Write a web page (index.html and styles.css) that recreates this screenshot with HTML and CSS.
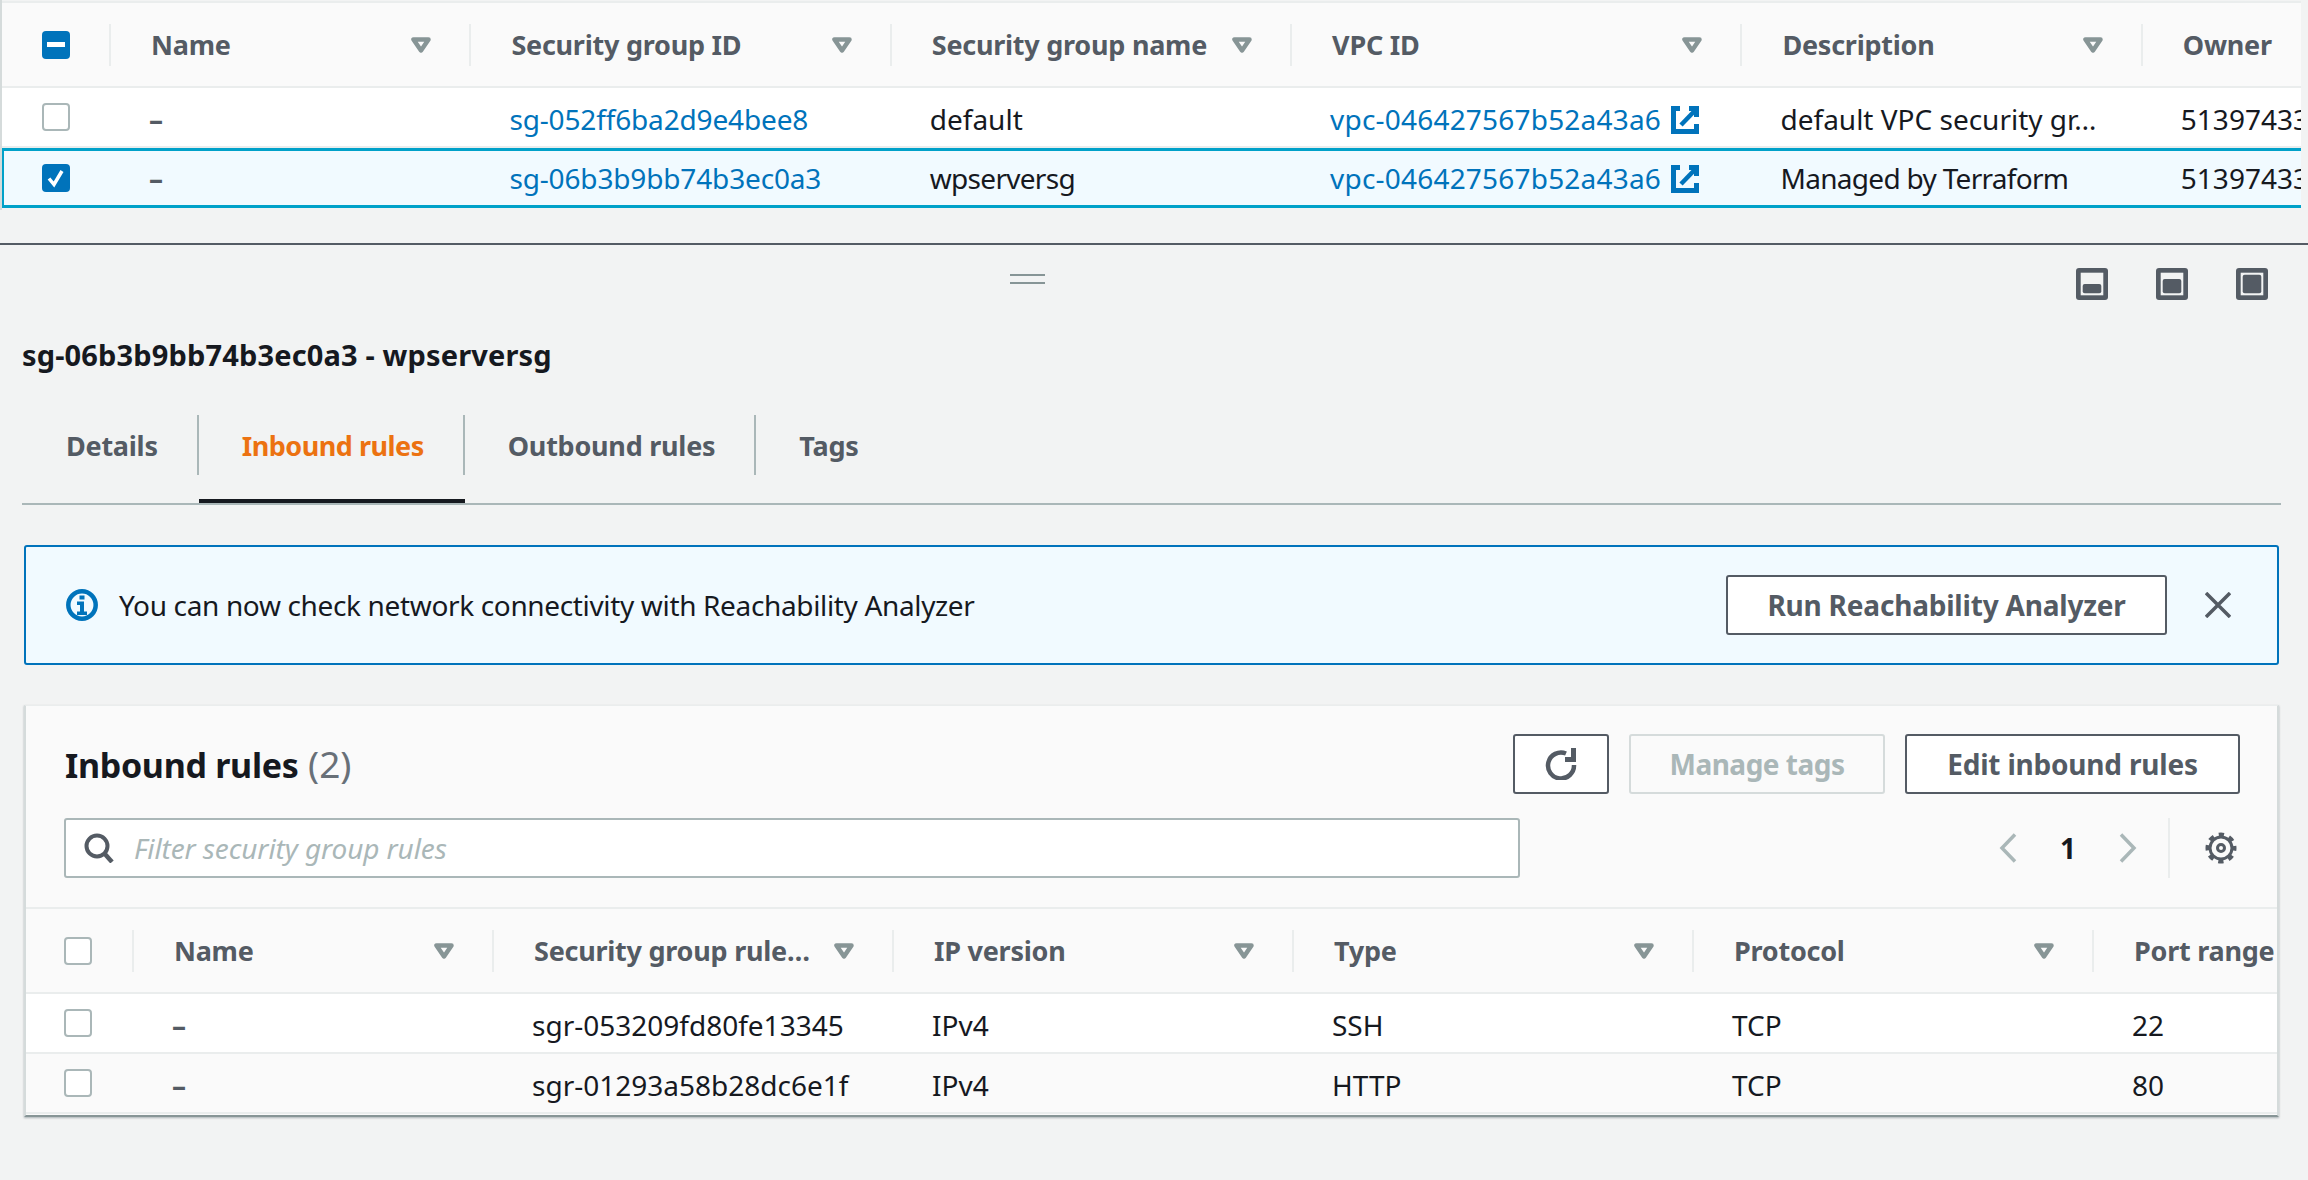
FILE: index.html
```html
<!DOCTYPE html>
<html lang="en">
<head>
  <meta charset="UTF-8">
  <title>Security Groups</title>
  <link rel="stylesheet" href="styles.css">
</head>
<body>
  <svg class="defs" width="0" height="0">
    <symbol id="caret" viewBox="0 0 20 16"><path d="M2.500 2.400h15L10 13.400z" fill="none" stroke="#879596" stroke-width="4.500" stroke-linejoin="round"/></symbol>
    <symbol id="ext" viewBox="0 0 28 28"><path d="M9 2.500H2.500v23h23V18" fill="none" stroke="#0073bb" stroke-width="5"/><path d="M18 2.500h7.500V11" fill="none" stroke="#0073bb" stroke-width="5"/><path d="M10 19L24 4.500" fill="none" stroke="#0073bb" stroke-width="4.500"/></symbol>
  </svg>

  <section class="top-table">
    <table class="grid">
      <colgroup>
        <col class="t1"><col class="t2"><col class="t3"><col class="t4"><col class="t5"><col class="t6"><col class="t7">
      </colgroup>
      <thead>
        <tr>
          <th class="check-col"><span class="check minus"><i></i></span></th>
          <th><div class="th-in">Name<svg class="caret"><use href="#caret"/></svg></div></th>
          <th><div class="th-in">Security group ID<svg class="caret"><use href="#caret"/></svg></div></th>
          <th><div class="th-in">Security group name<svg class="caret"><use href="#caret"/></svg></div></th>
          <th><div class="th-in">VPC ID<svg class="caret"><use href="#caret"/></svg></div></th>
          <th><div class="th-in">Description<svg class="caret"><use href="#caret"/></svg></div></th>
          <th><div class="th-in">Owner</div></th>
        </tr>
      </thead>
      <tbody>
        <tr>
          <td class="check-col"><span class="check"></span></td>
          <td class="dash">–</td>
          <td><a class="sg-link">sg-052ff6ba2d9e4bee8</a></td>
          <td>default</td>
          <td><a class="vpc-link">vpc-046427567b52a43a6</a><svg class="ext"><use href="#ext"/></svg></td>
          <td>default VPC security gr…</td>
          <td>513974335</td>
        </tr>
        <tr class="selected">
          <td class="check-col"><span class="check on"><svg viewBox="0 0 28 28"><path d="M7 14.500l5 6L20 7" fill="none" stroke="#fff" stroke-width="3.500"/></svg></span></td>
          <td class="dash">–</td>
          <td><a class="sg-link">sg-06b3b9bb74b3ec0a3</a></td>
          <td class="tight">wpserversg</td>
          <td><a class="vpc-link">vpc-046427567b52a43a6</a><svg class="ext"><use href="#ext"/></svg></td>
          <td class="tight">Managed by Terraform</td>
          <td>513974335</td>
        </tr>
      </tbody>
    </table>
  </section>

  <section class="split">
    <div class="split-bar">
      <div class="handle"></div>
      <div class="pane-icons">
        <svg class="pane-icon" viewBox="0 0 32 32"><rect width="32" height="32" rx="3" fill="#545b64"/><rect x="4.700" y="4.700" width="22.600" height="22.600" fill="#f2f3f3"/><rect x="6.700" y="16" width="18.600" height="9.300" rx="2" fill="#545b64"/></svg>
        <svg class="pane-icon" viewBox="0 0 32 32"><rect width="32" height="32" rx="3" fill="#545b64"/><rect x="4.700" y="4.700" width="22.600" height="22.600" fill="#f2f3f3"/><rect x="6.700" y="11" width="18.600" height="14.300" rx="2" fill="#545b64"/></svg>
        <svg class="pane-icon" viewBox="0 0 32 32"><rect width="32" height="32" rx="3" fill="#545b64"/><rect x="4.700" y="4.700" width="22.600" height="22.600" fill="#f2f3f3"/><rect x="6.700" y="6.700" width="18.600" height="18.600" rx="2" fill="#545b64"/></svg>
      </div>
    </div>

    <h2 class="detail-title">sg-06b3b9bb74b3ec0a3 - wpserversg</h2>

    <nav class="tabs">
      <a class="tab">Details</a>
      <a class="tab active">Inbound rules</a>
      <a class="tab">Outbound rules</a>
      <a class="tab last">Tags</a>
    </nav>

    <div class="flash">
      <svg class="info" viewBox="0 0 32 32"><circle cx="16" cy="16" r="13.700" fill="none" stroke="#0073bb" stroke-width="4.500"/><rect x="13.500" y="6.500" width="5" height="4" fill="#0073bb"/><path d="M11 12.500h7v10h3v3.500H11v-3.500h3v-6.500h-3z" fill="#0073bb"/></svg>
      <span class="flash-text">You can now check network connectivity with Reachability Analyzer</span>
      <button class="btn run">Run Reachability Analyzer</button>
      <svg class="close" viewBox="0 0 26 26"><path d="M1 1l24 24M25 1L1 25" fill="none" stroke="#545b64" stroke-width="3.500"/></svg>
    </div>

    <div class="card">
      <div class="card-head">
        <div class="card-row">
          <h3 class="card-title">Inbound rules <span class="count">(2)</span></h3>
          <button class="btn icon-btn"><svg viewBox="0 0 32 32" width="32" height="32"><path d="M21 5.500A13 13 0 1 0 29 17" fill="none" stroke="#545b64" stroke-width="4.500"/><path d="M28.500 0v11.500H20" fill="none" stroke="#545b64" stroke-width="5"/></svg></button>
          <button class="btn disabled">Manage tags</button>
          <button class="btn edit">Edit inbound rules</button>
        </div>
        <div class="card-row filter-row">
          <div class="filter">
            <svg viewBox="0 0 30 30" width="30" height="30"><circle cx="13" cy="13" r="10.500" fill="none" stroke="#545b64" stroke-width="4"/><path d="M20 20l8 9" fill="none" stroke="#545b64" stroke-width="4.500"/></svg>
            <span class="placeholder">Filter security group rules</span>
          </div>
          <div class="pager">
            <svg viewBox="0 0 18 30" width="18" height="30"><path d="M16 1.500L3 15l13 13.500" fill="none" stroke="#aab7b8" stroke-width="3.500"/></svg>
            <span class="page-num">1</span>
            <svg viewBox="0 0 18 30" width="18" height="30"><path d="M2 1.500L15 15 2 28.500" fill="none" stroke="#aab7b8" stroke-width="3.500"/></svg>
          </div>
          <div class="gear-wrap">
            <svg viewBox="0 0 32 32" width="32" height="32"><circle class="gear-teeth" cx="16" cy="16" r="13.500"/><circle class="gear-ring" cx="16" cy="16" r="11"/><circle class="gear-hub" cx="16" cy="16" r="3.500"/></svg>
          </div>
        </div>
      </div>

      <table class="grid rules">
        <colgroup>
          <col class="r1"><col class="r2"><col class="r3"><col class="r4"><col class="r5"><col class="r6"><col class="r7">
        </colgroup>
        <thead>
          <tr>
            <th class="check-col"><span class="check"></span></th>
            <th><div class="th-in">Name<svg class="caret"><use href="#caret"/></svg></div></th>
            <th><div class="th-in">Security group rule…<svg class="caret"><use href="#caret"/></svg></div></th>
            <th><div class="th-in">IP version<svg class="caret"><use href="#caret"/></svg></div></th>
            <th><div class="th-in">Type<svg class="caret"><use href="#caret"/></svg></div></th>
            <th><div class="th-in">Protocol<svg class="caret"><use href="#caret"/></svg></div></th>
            <th><div class="th-in">Port range</div></th>
          </tr>
        </thead>
        <tbody>
          <tr>
            <td class="check-col"><span class="check"></span></td>
            <td class="dash">–</td>
            <td>sgr-053209fd80fe13345</td>
            <td>IPv4</td>
            <td>SSH</td>
            <td>TCP</td>
            <td>22</td>
          </tr>
          <tr class="alt">
            <td class="check-col"><span class="check"></span></td>
            <td class="dash">–</td>
            <td>sgr-01293a58b28dc6e1f</td>
            <td>IPv4</td>
            <td>HTTP</td>
            <td>TCP</td>
            <td>80</td>
          </tr>
        </tbody>
      </table>
    </div>
  </section>
</body>
</html>
```

FILE: styles.css
```css
:root {
  --ink: #16191f;
  --slate: #545b64;
  --line: #eaeded;
  --muted: #aab7b8;
  --blue: #0073bb;
  --cyan: #00a1c9;
  --tint: #f1faff;
  --page: #f2f3f3;
  --head: #fafafa;
}

* {
  box-sizing: border-box;
}

html, body {
  height: 100%;
}

body {
  margin: 0;
  overflow: hidden;
  background: var(--page);
  color: var(--ink);
  font-family: "Noto Sans", "Open Sans", sans-serif;
  font-size: 28px;
}

.defs {
  display: block;
  height: 0;
}

h2, h3 {
  margin: 0;
}

/* tables */
.grid {
  width: 100%;
  table-layout: fixed;
  border-collapse: separate;
  border-spacing: 0;
}

.grid th {
  height: 85px;
  padding: 0;
  background: var(--head);
  border-bottom: 2px solid var(--line);
  color: var(--slate);
  font-size: 27px;
  font-weight: 700;
  letter-spacing: -0.25px;
  text-align: left;
}

.grid td {
  height: 60px;
  padding: 3px 0 0 40px;
  background: #fff;
  border-bottom: 2px solid var(--line);
  white-space: nowrap;
  overflow: hidden;
}

.grid td.check-col, .grid th.check-col {
  padding: 0;
}

.grid td.tight {
  letter-spacing: -0.7px;
}

.th-in {
  display: flex;
  align-items: center;
  justify-content: space-between;
  height: 42px;
  padding: 0 38px 0 40px;
  border-left: 2px solid var(--line);
  white-space: nowrap;
}

.caret {
  width: 20px;
  height: 16px;
  flex: none;
}

.grid td.dash {
  color: var(--slate);
  font-weight: 700;
}

.grid a {
  color: var(--blue);
}

.sg-link {
  letter-spacing: -0.15px;
}

.vpc-link {
  letter-spacing: 0.2px;
}

.ext {
  width: 28px;
  height: 28px;
  margin-left: 10px;
  vertical-align: -4px;
}

.check {
  display: block;
  width: 28px;
  height: 28px;
  border: 2px solid var(--muted);
  border-radius: 4px;
  background: #fff;
}

.check.minus, .check.on {
  border: 0;
  background: var(--blue);
}

.check.minus {
  display: flex;
  align-items: center;
  justify-content: center;
}

.check.minus i {
  width: 18px;
  height: 5px;
  background: #fff;
}

.check svg {
  display: block;
}

/* top table */
.top-table {
  height: 210px;
  margin-right: 7px;
  padding-top: 1px;
  overflow: hidden;
  border-left: 2px solid #d5dbdb;
  background: var(--page);
}

.top-table .grid {
  border-top: 2px solid var(--line);
}

.t1 { width: 107px; }
.t2 { width: 360px; }
.t3 { width: 420px; }
.t4 { width: 400px; }
.t5 { width: 450px; }
.t6 { width: 400px; }
.t7 { width: 160px; }

.top-table .check-col .check {
  margin-left: 40px;
}

.top-table .selected td {
  padding-top: 0;
  background: var(--tint);
  border-top: 3px solid var(--cyan);
  border-bottom: 3px solid var(--cyan);
}

.top-table .selected td:first-child {
  border-left: 2px solid var(--cyan);
}

.top-table .selected .check-col .check {
  margin-left: 38px;
}

/* lower pane */
.split {
  margin-top: 33px;
  border-top: 2px solid var(--slate);
  padding: 0 27px 0 22px;
}

.split-bar {
  display: flex;
  align-items: center;
  justify-content: flex-end;
  height: 78px;
  padding: 0 13px 10px 0;
}

.handle {
  width: 35px;
  height: 10px;
  margin-right: 1031px;
  border-top: 2px solid #879596;
  border-bottom: 2px solid #879596;
}

.pane-icons {
  display: flex;
  gap: 48px;
  margin-top: 10px;
}

.pane-icon {
  width: 32px;
  height: 32px;
}

.detail-title {
  margin-top: 13px;
  font-size: 29px;
  font-weight: 700;
  letter-spacing: 0.15px;
  line-height: 38px;
}

/* tabs */
.tabs {
  display: flex;
  margin-top: 41px;
  border-bottom: 2px solid var(--muted);
}

.tab {
  display: flex;
  align-items: center;
  height: 88px;
  padding: 0 0 28px 43px;
  color: var(--slate);
  font-size: 27px;
  font-weight: 700;
  letter-spacing: -0.25px;
}

.tab:first-child {
  padding-left: 44px;
}

.tab::after {
  content: "";
  display: block;
  width: 2px;
  height: 60px;
  margin-left: 39px;
  background: var(--muted);
}

.tab.last::after {
  display: none;
}

.tab.active {
  color: #ec7211;
  letter-spacing: -0.5px;
  box-shadow: inset 0 -4px 0 var(--ink);
}

/* notification */
.flash {
  display: flex;
  align-items: center;
  height: 120px;
  margin: 40px 2px 0;
  padding: 0 46px 0 40px;
  background: var(--tint);
  border: 2px solid var(--blue);
  border-radius: 3px;
}

.info {
  width: 32px;
  height: 32px;
  flex: none;
}

.flash-text {
  flex: 1;
  margin-left: 21px;
  letter-spacing: -0.35px;
}

.btn {
  height: 60px;
  padding: 0 40px;
  background: #fff;
  border: 2px solid var(--slate);
  border-radius: 3px;
  color: var(--slate);
  font-family: inherit;
  font-size: 28px;
  font-weight: 700;
  letter-spacing: -0.2px;
  white-space: nowrap;
}

.run {
  width: 441px;
  padding: 0;
}

.close {
  width: 26px;
  height: 26px;
  margin-left: 38px;
  flex: none;
}

/* rules card */
.card {
  height: 412px;
  margin: 40px 2px 0;
  background: var(--head);
  border-top: 1px solid var(--line);
  border-right: 2px solid #d5dbdb;
  border-left: 2px solid #d5dbdb;
  border-bottom: 2px solid #879596;
  box-shadow: 0 1px 2px rgba(0, 28, 36, 0.3);
  overflow: hidden;
}

.card-head {
  height: 201px;
  padding: 28px 37px 0 38px;
}

.card-row {
  display: flex;
  align-items: center;
  height: 60px;
}

.card-title {
  flex: 1;
  padding: 0 0 2px 1px;
  font-size: 34px;
  font-weight: 700;
  letter-spacing: -0.3px;
}

.count {
  margin-left: 1px;
  color: #687078;
  font-size: 37px;
  font-weight: 400;
  letter-spacing: 0;
}

.icon-btn {
  display: flex;
  align-items: center;
  justify-content: center;
  width: 96px;
  padding: 0;
}

.disabled {
  width: 256px;
  margin-left: 20px;
  padding: 0;
  background: var(--head);
  border-color: #d5dbdb;
  color: var(--muted);
  letter-spacing: -0.5px;
}

.edit {
  width: 335px;
  margin-left: 20px;
  padding: 0;
}

.filter-row {
  margin-top: 24px;
}

.filter {
  display: flex;
  align-items: center;
  gap: 20px;
  width: 1456px;
  height: 60px;
  padding-left: 18px;
  background: #fff;
  border: 2px solid var(--muted);
  border-radius: 3px;
}

.placeholder {
  color: var(--muted);
  font-style: italic;
  letter-spacing: -0.1px;
}

.pager {
  display: flex;
  align-items: center;
  margin-left: 479px;
}

.page-num {
  width: 102px;
  font-weight: 700;
  text-align: center;
}

.gear-wrap {
  display: flex;
  align-items: center;
  height: 60px;
  margin-left: 31px;
  padding-left: 35px;
  border-left: 2px solid var(--line);
}

.gear-wrap circle {
  fill: none;
  stroke: var(--slate);
}

.gear-teeth {
  stroke-width: 4;
  stroke-dasharray: 5.3 5.3;
  stroke-dashoffset: 2.65;
}

.gear-ring {
  stroke-width: 3;
}

.gear-hub {
  stroke-width: 3;
}

/* rules table */
.rules {
  border-top: 2px solid var(--line);
}

.r1 { width: 106px; }
.r2 { width: 360px; }
.r3 { width: 400px; }
.r4 { width: 400px; }
.r5 { width: 400px; }
.r6 { width: 400px; }
.r7 { width: 187px; }

.rules .check-col .check {
  margin-left: 38px;
}

.rules .alt td {
  background: var(--head);
}
```
